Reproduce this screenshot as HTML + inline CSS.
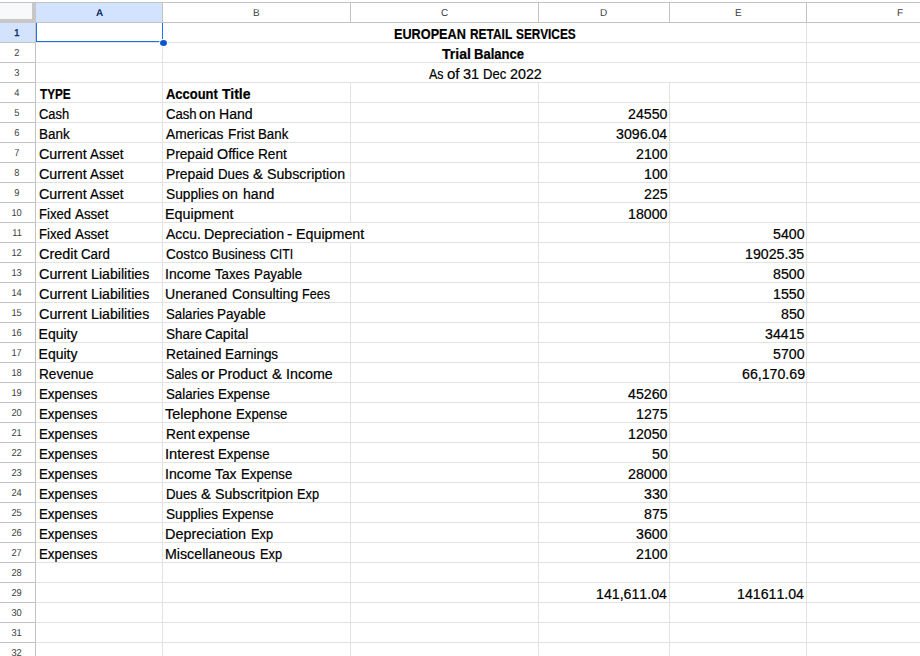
<!DOCTYPE html>
<html><head><meta charset="utf-8"><title>Trial Balance</title>
<style>
html,body{margin:0;padding:0;background:#fff;}
body{width:920px;height:656px;overflow:hidden;position:relative;font-family:"Liberation Sans",sans-serif;}
#sheet{position:absolute;left:0;top:0;width:920px;height:656px;overflow:hidden;background:#fff;}
#sheet div{position:absolute;}
.hl{height:1px;background:#e2e2e2;}
.vl{width:1px;background:#e2e2e2;}
.hh{height:1px;background:#c2c4c3;}
.hv{width:1px;background:#c2c4c3;}
.ch{top:3px;height:19px;line-height:19px;font-size:10px;color:#3c4043;text-align:center;}
.ch span,.rh span{display:inline-block;transform:skewX(0.05deg);}
.rh span{transform:scaleX(0.93) skewX(0.05deg);}
.rh{left:0;width:35px;padding-right:1.4px;box-sizing:border-box;height:19px;line-height:19px;font-size:10px;color:#3c4043;text-align:center;}
.sel{background:#d3e3fd;color:#0b2a63;font-weight:bold;}
.ch.sel{padding-left:1px;box-sizing:border-box;}
.rh.sel{font-weight:normal;-webkit-text-stroke:0.45px #0b2a63;}
.t{font-size:14px;line-height:20px;height:20px;white-space:pre;color:#000;transform-origin:0 0;-webkit-text-stroke:0.2px #000;}
.b{font-weight:bold;}
.n{font-kerning:none;}
</style></head><body><div id="sheet">

<div class="hl" style="left:36px;top:42px;width:884px"></div>
<div class="hl" style="left:36px;top:62px;width:884px"></div>
<div class="hl" style="left:36px;top:82px;width:884px"></div>
<div class="hl" style="left:36px;top:102px;width:884px"></div>
<div class="hl" style="left:36px;top:122px;width:884px"></div>
<div class="hl" style="left:36px;top:142px;width:884px"></div>
<div class="hl" style="left:36px;top:162px;width:884px"></div>
<div class="hl" style="left:36px;top:182px;width:884px"></div>
<div class="hl" style="left:36px;top:202px;width:884px"></div>
<div class="hl" style="left:36px;top:222px;width:884px"></div>
<div class="hl" style="left:36px;top:242px;width:884px"></div>
<div class="hl" style="left:36px;top:262px;width:884px"></div>
<div class="hl" style="left:36px;top:282px;width:884px"></div>
<div class="hl" style="left:36px;top:302px;width:884px"></div>
<div class="hl" style="left:36px;top:322px;width:884px"></div>
<div class="hl" style="left:36px;top:342px;width:884px"></div>
<div class="hl" style="left:36px;top:362px;width:884px"></div>
<div class="hl" style="left:36px;top:382px;width:884px"></div>
<div class="hl" style="left:36px;top:402px;width:884px"></div>
<div class="hl" style="left:36px;top:422px;width:884px"></div>
<div class="hl" style="left:36px;top:442px;width:884px"></div>
<div class="hl" style="left:36px;top:462px;width:884px"></div>
<div class="hl" style="left:36px;top:482px;width:884px"></div>
<div class="hl" style="left:36px;top:502px;width:884px"></div>
<div class="hl" style="left:36px;top:522px;width:884px"></div>
<div class="hl" style="left:36px;top:542px;width:884px"></div>
<div class="hl" style="left:36px;top:562px;width:884px"></div>
<div class="hl" style="left:36px;top:582px;width:884px"></div>
<div class="hl" style="left:36px;top:602px;width:884px"></div>
<div class="hl" style="left:36px;top:622px;width:884px"></div>
<div class="hl" style="left:36px;top:642px;width:884px"></div>
<div class="vl" style="left:162px;top:23px;height:633px"></div>
<div class="vl" style="left:806px;top:23px;height:633px"></div>
<div class="vl" style="left:350px;top:83px;height:140px"></div>
<div class="vl" style="left:350px;top:243px;height:413px"></div>
<div class="vl" style="left:538px;top:83px;height:573px"></div>
<div class="vl" style="left:669px;top:83px;height:573px"></div>
<div class="hh" style="left:0;top:2px;width:920px"></div>
<div class="hh" style="left:0;top:22px;width:920px"></div>
<div class="ch sel" style="left:36px;width:126px"><span>A</span></div>
<div class="ch" style="left:163px;width:187px"><span>B</span></div>
<div class="ch" style="left:351px;width:187px"><span>C</span></div>
<div class="ch" style="left:539px;width:130px"><span>D</span></div>
<div class="ch" style="left:670px;width:136px"><span>E</span></div>
<div class="ch" style="left:807px;width:187px"><span>F</span></div>
<div class="hv" style="left:162px;top:3px;height:19px"></div>
<div class="hv" style="left:350px;top:3px;height:19px"></div>
<div class="hv" style="left:538px;top:3px;height:19px"></div>
<div class="hv" style="left:669px;top:3px;height:19px"></div>
<div class="hv" style="left:806px;top:3px;height:19px"></div>
<div style="left:0;top:3px;width:32px;height:16px;background:#f8f9fa"></div>
<div style="left:32px;top:3px;width:4px;height:20px;background:#c7c7c7"></div>
<div style="left:0;top:19px;width:36px;height:4px;background:#c7c7c7"></div>
<div class="rh sel" style="top:23px"><span>1</span></div>
<div class="hh" style="left:0;top:42px;width:35px"></div>
<div class="rh" style="top:43px"><span>2</span></div>
<div class="hh" style="left:0;top:62px;width:35px"></div>
<div class="rh" style="top:63px"><span>3</span></div>
<div class="hh" style="left:0;top:82px;width:35px"></div>
<div class="rh" style="top:83px"><span>4</span></div>
<div class="hh" style="left:0;top:102px;width:35px"></div>
<div class="rh" style="top:103px"><span>5</span></div>
<div class="hh" style="left:0;top:122px;width:35px"></div>
<div class="rh" style="top:123px"><span>6</span></div>
<div class="hh" style="left:0;top:142px;width:35px"></div>
<div class="rh" style="top:143px"><span>7</span></div>
<div class="hh" style="left:0;top:162px;width:35px"></div>
<div class="rh" style="top:163px"><span>8</span></div>
<div class="hh" style="left:0;top:182px;width:35px"></div>
<div class="rh" style="top:183px"><span>9</span></div>
<div class="hh" style="left:0;top:202px;width:35px"></div>
<div class="rh" style="top:203px"><span>10</span></div>
<div class="hh" style="left:0;top:222px;width:35px"></div>
<div class="rh" style="top:223px"><span>11</span></div>
<div class="hh" style="left:0;top:242px;width:35px"></div>
<div class="rh" style="top:243px"><span>12</span></div>
<div class="hh" style="left:0;top:262px;width:35px"></div>
<div class="rh" style="top:263px"><span>13</span></div>
<div class="hh" style="left:0;top:282px;width:35px"></div>
<div class="rh" style="top:283px"><span>14</span></div>
<div class="hh" style="left:0;top:302px;width:35px"></div>
<div class="rh" style="top:303px"><span>15</span></div>
<div class="hh" style="left:0;top:322px;width:35px"></div>
<div class="rh" style="top:323px"><span>16</span></div>
<div class="hh" style="left:0;top:342px;width:35px"></div>
<div class="rh" style="top:343px"><span>17</span></div>
<div class="hh" style="left:0;top:362px;width:35px"></div>
<div class="rh" style="top:363px"><span>18</span></div>
<div class="hh" style="left:0;top:382px;width:35px"></div>
<div class="rh" style="top:383px"><span>19</span></div>
<div class="hh" style="left:0;top:402px;width:35px"></div>
<div class="rh" style="top:403px"><span>20</span></div>
<div class="hh" style="left:0;top:422px;width:35px"></div>
<div class="rh" style="top:423px"><span>21</span></div>
<div class="hh" style="left:0;top:442px;width:35px"></div>
<div class="rh" style="top:443px"><span>22</span></div>
<div class="hh" style="left:0;top:462px;width:35px"></div>
<div class="rh" style="top:463px"><span>23</span></div>
<div class="hh" style="left:0;top:482px;width:35px"></div>
<div class="rh" style="top:483px"><span>24</span></div>
<div class="hh" style="left:0;top:502px;width:35px"></div>
<div class="rh" style="top:503px"><span>25</span></div>
<div class="hh" style="left:0;top:522px;width:35px"></div>
<div class="rh" style="top:523px"><span>26</span></div>
<div class="hh" style="left:0;top:542px;width:35px"></div>
<div class="rh" style="top:543px"><span>27</span></div>
<div class="hh" style="left:0;top:562px;width:35px"></div>
<div class="rh" style="top:563px"><span>28</span></div>
<div class="hh" style="left:0;top:582px;width:35px"></div>
<div class="rh" style="top:583px"><span>29</span></div>
<div class="hh" style="left:0;top:602px;width:35px"></div>
<div class="rh" style="top:603px"><span>30</span></div>
<div class="hh" style="left:0;top:622px;width:35px"></div>
<div class="rh" style="top:623px"><span>31</span></div>
<div class="hh" style="left:0;top:642px;width:35px"></div>
<div class="rh" style="top:643px"><span>32</span></div>
<div class="hh" style="left:0;top:662px;width:35px"></div>
<div class="hv" style="left:35px;top:23px;height:633px"></div>
<div style="left:36px;top:23px;width:1px;height:19px;background:#1a73e8"></div>
<div style="left:162px;top:23px;width:1px;height:16px;background:#1a73e8"></div>
<div style="left:36px;top:41px;width:124px;height:1px;background:#1a73e8"></div>
<div style="left:159px;top:39px;width:9px;height:8px;border-radius:50%;background:#fff"></div>
<div style="left:160px;top:40px;width:7px;height:6px;border-radius:50%;background:#0b57d0"></div>
<div class="t b" style="left:393.92px;top:24.15px;transform:scaleX(0.9055)">EUROPEAN</div>
<div class="t b" style="left:469.76px;top:24.15px;transform:scaleX(0.8515)">RETAIL</div>
<div class="t b" style="left:516.19px;top:24.15px;transform:scaleX(0.8459)">SERVICES</div>
<div class="t b" style="left:442.20px;top:44.15px;transform:scaleX(1.0071)">Trial</div>
<div class="t b" style="left:474.10px;top:44.15px;transform:scaleX(0.9314)">Balance</div>
<div class="t" style="left:428.50px;top:64.15px;transform:scaleX(0.8848)">As</div>
<div class="t" style="left:447.04px;top:64.15px;transform:scaleX(1.0685)">of</div>
<div class="t" style="left:463.06px;top:64.15px;transform:scaleX(1.0395)">31</div>
<div class="t" style="left:483.03px;top:64.15px;transform:scaleX(0.9308)">Dec</div>
<div class="t" style="left:509.78px;top:64.15px;transform:scaleX(1.0205)">2022</div>
<div class="t b" style="left:39.60px;top:84.15px;transform:scaleX(0.8386)">TYPE</div>
<div class="t" style="left:38.74px;top:104.15px;transform:scaleX(0.9216)">Cash</div>
<div class="t" style="left:38.64px;top:124.15px;transform:scaleX(0.9613)">Bank</div>
<div class="t" style="left:38.69px;top:144.15px;transform:scaleX(1.0230)">Current</div>
<div class="t" style="left:90.48px;top:144.15px;transform:scaleX(0.9577)">Asset</div>
<div class="t" style="left:38.69px;top:164.15px;transform:scaleX(1.0230)">Current</div>
<div class="t" style="left:90.48px;top:164.15px;transform:scaleX(0.9577)">Asset</div>
<div class="t" style="left:38.69px;top:184.15px;transform:scaleX(1.0230)">Current</div>
<div class="t" style="left:90.48px;top:184.15px;transform:scaleX(0.9577)">Asset</div>
<div class="t" style="left:38.66px;top:204.15px;transform:scaleX(0.9392)">Fixed</div>
<div class="t" style="left:75.16px;top:204.15px;transform:scaleX(0.9553)">Asset</div>
<div class="t" style="left:38.66px;top:224.15px;transform:scaleX(0.9392)">Fixed</div>
<div class="t" style="left:75.16px;top:224.15px;transform:scaleX(0.9553)">Asset</div>
<div class="t" style="left:38.69px;top:244.15px;transform:scaleX(1.0279)">Credit</div>
<div class="t" style="left:80.99px;top:244.15px;transform:scaleX(0.9496)">Card</div>
<div class="t" style="left:38.59px;top:264.15px;transform:scaleX(1.0262)">Current</div>
<div class="t" style="left:90.61px;top:264.15px;transform:scaleX(1.0129)">Liabilities</div>
<div class="t" style="left:38.59px;top:284.15px;transform:scaleX(1.0262)">Current</div>
<div class="t" style="left:90.61px;top:284.15px;transform:scaleX(1.0129)">Liabilities</div>
<div class="t" style="left:38.59px;top:304.15px;transform:scaleX(1.0262)">Current</div>
<div class="t" style="left:90.61px;top:304.15px;transform:scaleX(1.0129)">Liabilities</div>
<div class="t" style="left:38.60px;top:324.15px;transform:scaleX(1.0000)">Equity</div>
<div class="t" style="left:38.60px;top:344.15px;transform:scaleX(1.0000)">Equity</div>
<div class="t" style="left:38.63px;top:364.15px;transform:scaleX(0.9725)">Revenue</div>
<div class="t" style="left:38.65px;top:384.15px;transform:scaleX(0.9500)">Expenses</div>
<div class="t" style="left:38.65px;top:404.15px;transform:scaleX(0.9500)">Expenses</div>
<div class="t" style="left:38.65px;top:424.15px;transform:scaleX(0.9500)">Expenses</div>
<div class="t" style="left:38.65px;top:444.15px;transform:scaleX(0.9500)">Expenses</div>
<div class="t" style="left:38.65px;top:464.15px;transform:scaleX(0.9500)">Expenses</div>
<div class="t" style="left:38.65px;top:484.15px;transform:scaleX(0.9500)">Expenses</div>
<div class="t" style="left:38.65px;top:504.15px;transform:scaleX(0.9500)">Expenses</div>
<div class="t" style="left:38.65px;top:524.15px;transform:scaleX(0.9500)">Expenses</div>
<div class="t" style="left:38.65px;top:544.15px;transform:scaleX(0.9500)">Expenses</div>
<div class="t b" style="left:165.77px;top:84.15px;transform:scaleX(0.9256)">Account</div>
<div class="t b" style="left:222.00px;top:84.15px;transform:scaleX(0.9982)">Title</div>
<div class="t" style="left:165.53px;top:104.15px;transform:scaleX(0.9376)">Cash</div>
<div class="t" style="left:199.17px;top:104.15px;transform:scaleX(1.0667)">on</div>
<div class="t" style="left:219.30px;top:104.15px;transform:scaleX(1.0047)">Hand</div>
<div class="t" style="left:166.00px;top:124.15px;transform:scaleX(0.9832)">Americas</div>
<div class="t" style="left:227.55px;top:124.15px;transform:scaleX(0.9804)">Frist</div>
<div class="t" style="left:258.36px;top:124.15px;transform:scaleX(0.9496)">Bank</div>
<div class="t" style="left:165.52px;top:144.15px;transform:scaleX(0.9811)">Prepaid</div>
<div class="t" style="left:217.11px;top:144.15px;transform:scaleX(1.0225)">Office</div>
<div class="t" style="left:258.19px;top:144.15px;transform:scaleX(0.9765)">Rent</div>
<div class="t" style="left:165.51px;top:164.15px;transform:scaleX(0.9910)">Prepaid</div>
<div class="t" style="left:217.82px;top:164.15px;transform:scaleX(0.9488)">Dues</div>
<div class="t" style="left:252.82px;top:164.15px;transform:scaleX(1.0564)">&amp;</div>
<div class="t" style="left:267.02px;top:164.15px;transform:scaleX(1.0129)">Subscription</div>
<div class="t" style="left:165.51px;top:184.15px;transform:scaleX(0.9805)">Supplies</div>
<div class="t" style="left:222.17px;top:184.15px;transform:scaleX(1.0169)">on</div>
<div class="t" style="left:242.64px;top:184.15px;transform:scaleX(1.0036)">hand</div>
<div class="t" style="left:165.48px;top:204.15px;transform:scaleX(1.0227)">Equipment</div>
<div class="t" style="left:166.00px;top:224.15px;transform:scaleX(0.9950)">Accu.</div>
<div class="t" style="left:203.60px;top:224.15px;transform:scaleX(1.0198)">Depreciation</div>
<div class="t" style="left:287.36px;top:224.15px;transform:scaleX(1.1384)">-</div>
<div class="t" style="left:296.22px;top:224.15px;transform:scaleX(1.0191)">Equipment</div>
<div class="t" style="left:165.52px;top:244.15px;transform:scaleX(0.9694)">Costco</div>
<div class="t" style="left:211.80px;top:244.15px;transform:scaleX(0.9438)">Business</div>
<div class="t" style="left:269.61px;top:244.15px;transform:scaleX(0.8770)">CITI</div>
<div class="t" style="left:165.25px;top:264.15px;transform:scaleX(0.9999)">Income</div>
<div class="t" style="left:214.88px;top:264.15px;transform:scaleX(0.9462)">Taxes</div>
<div class="t" style="left:253.67px;top:264.15px;transform:scaleX(0.9515)">Payable</div>
<div class="t" style="left:165.49px;top:284.15px;transform:scaleX(1.0086)">Uneraned</div>
<div class="t" style="left:231.81px;top:284.15px;transform:scaleX(1.0009)">Consulting</div>
<div class="t" style="left:302.39px;top:284.15px;transform:scaleX(0.8979)">Fees</div>
<div class="t" style="left:165.53px;top:304.15px;transform:scaleX(0.9430)">Salaries</div>
<div class="t" style="left:217.47px;top:304.15px;transform:scaleX(0.9656)">Payable</div>
<div class="t" style="left:165.52px;top:324.15px;transform:scaleX(0.9627)">Share</div>
<div class="t" style="left:205.37px;top:324.15px;transform:scaleX(0.9973)">Capital</div>
<div class="t" style="left:165.51px;top:344.15px;transform:scaleX(0.9902)">Retained</div>
<div class="t" style="left:225.40px;top:344.15px;transform:scaleX(0.9607)">Earnings</div>
<div class="t" style="left:165.55px;top:364.15px;transform:scaleX(0.9012)">Sales</div>
<div class="t" style="left:201.03px;top:364.15px;transform:scaleX(1.0820)">or</div>
<div class="t" style="left:218.34px;top:364.15px;transform:scaleX(1.0226)">Product</div>
<div class="t" style="left:271.61px;top:364.15px;transform:scaleX(1.0544)">&amp;</div>
<div class="t" style="left:285.64px;top:364.15px;transform:scaleX(1.0190)">Income</div>
<div class="t" style="left:165.53px;top:384.15px;transform:scaleX(0.9496)">Salaries</div>
<div class="t" style="left:217.86px;top:384.15px;transform:scaleX(0.9517)">Expense</div>
<div class="t" style="left:165.24px;top:404.15px;transform:scaleX(1.0321)">Telephone</div>
<div class="t" style="left:235.86px;top:404.15px;transform:scaleX(0.9424)">Expense</div>
<div class="t" style="left:165.52px;top:424.15px;transform:scaleX(0.9835)">Rent</div>
<div class="t" style="left:198.49px;top:424.15px;transform:scaleX(0.9811)">expense</div>
<div class="t" style="left:165.19px;top:444.15px;transform:scaleX(1.0513)">Interest</div>
<div class="t" style="left:218.45px;top:444.15px;transform:scaleX(0.9454)">Expense</div>
<div class="t" style="left:165.24px;top:464.15px;transform:scaleX(1.0108)">Income</div>
<div class="t" style="left:215.40px;top:464.15px;transform:scaleX(0.9844)">Tax</div>
<div class="t" style="left:240.91px;top:464.15px;transform:scaleX(0.9414)">Expense</div>
<div class="t" style="left:165.55px;top:484.15px;transform:scaleX(0.9489)">Dues</div>
<div class="t" style="left:200.56px;top:484.15px;transform:scaleX(1.0566)">&amp;</div>
<div class="t" style="left:214.76px;top:484.15px;transform:scaleX(1.0130)">Subscritpion</div>
<div class="t" style="left:297.28px;top:484.15px;transform:scaleX(0.9137)">Exp</div>
<div class="t" style="left:165.51px;top:504.15px;transform:scaleX(0.9713)">Supplies</div>
<div class="t" style="left:221.83px;top:504.15px;transform:scaleX(0.9476)">Expense</div>
<div class="t" style="left:165.47px;top:524.15px;transform:scaleX(1.0295)">Depreciation</div>
<div class="t" style="left:250.79px;top:524.15px;transform:scaleX(0.9134)">Exp</div>
<div class="t" style="left:165.48px;top:544.15px;transform:scaleX(1.0156)">Miscellaneous</div>
<div class="t" style="left:259.76px;top:544.15px;transform:scaleX(0.9145)">Exp</div>
<div class="t n" style="left:628.04px;top:104.15px;transform:scaleX(1.0120)">24550</div>
<div class="t n" style="left:616.15px;top:124.15px;transform:scaleX(1.0120)">3096.04</div>
<div class="t n" style="left:635.88px;top:144.15px;transform:scaleX(1.0120)">2100</div>
<div class="t n" style="left:643.72px;top:164.15px;transform:scaleX(1.0120)">100</div>
<div class="t n" style="left:643.98px;top:184.15px;transform:scaleX(1.0120)">225</div>
<div class="t n" style="left:628.04px;top:204.15px;transform:scaleX(1.0120)">18000</div>
<div class="t n" style="left:628.04px;top:384.15px;transform:scaleX(1.0120)">45260</div>
<div class="t n" style="left:635.88px;top:404.15px;transform:scaleX(1.0120)">1275</div>
<div class="t n" style="left:628.04px;top:424.15px;transform:scaleX(1.0120)">12050</div>
<div class="t n" style="left:651.57px;top:444.15px;transform:scaleX(1.0120)">50</div>
<div class="t n" style="left:628.04px;top:464.15px;transform:scaleX(1.0120)">28000</div>
<div class="t n" style="left:643.72px;top:484.15px;transform:scaleX(1.0120)">330</div>
<div class="t n" style="left:643.98px;top:504.15px;transform:scaleX(1.0120)">875</div>
<div class="t n" style="left:635.88px;top:524.15px;transform:scaleX(1.0120)">3600</div>
<div class="t n" style="left:635.88px;top:544.15px;transform:scaleX(1.0120)">2100</div>
<div class="t n" style="left:596.41px;top:584.15px;transform:scaleX(1.0120)">141,611.04</div>
<div class="t n" style="left:772.88px;top:224.15px;transform:scaleX(1.0120)">5400</div>
<div class="t n" style="left:745.30px;top:244.15px;transform:scaleX(1.0120)">19025.35</div>
<div class="t n" style="left:772.88px;top:264.15px;transform:scaleX(1.0120)">8500</div>
<div class="t n" style="left:772.88px;top:284.15px;transform:scaleX(1.0120)">1550</div>
<div class="t n" style="left:780.72px;top:304.15px;transform:scaleX(1.0120)">850</div>
<div class="t n" style="left:765.04px;top:324.15px;transform:scaleX(1.0120)">34415</div>
<div class="t n" style="left:772.88px;top:344.15px;transform:scaleX(1.0120)">5700</div>
<div class="t n" style="left:741.51px;top:364.15px;transform:scaleX(1.0120)">66,170.69</div>
<div class="t n" style="left:737.46px;top:584.15px;transform:scaleX(1.0120)">141611.04</div>
</div></body></html>
